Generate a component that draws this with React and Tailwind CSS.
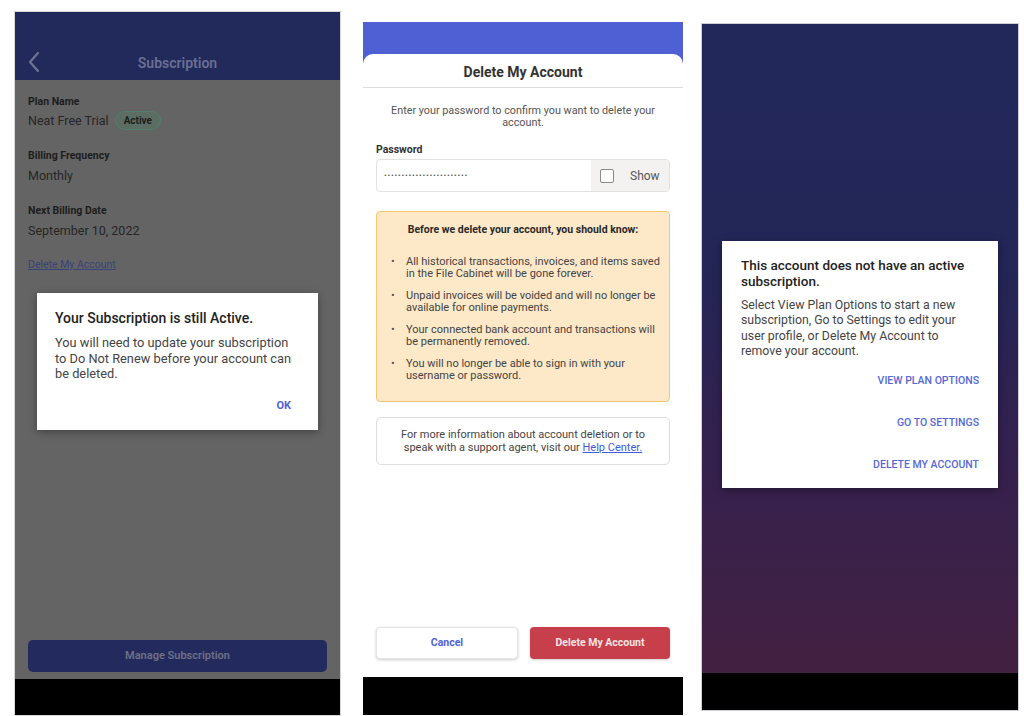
import React from "react";

function Panel1() {
  return (
    <div className="relative mt-[12px] ml-[15px] flex h-[703px] w-[325px] flex-col bg-[#646464] outline outline-1 outline-[#d8d8d8]">
      <div className="relative flex h-[68px] items-end justify-center bg-[#222a5c] pb-[6px]">
        <svg className="absolute left-[12px] bottom-[7px]" width="14" height="22" viewBox="0 0 14 22" fill="none">
          <path d="M11 2 L3 11 L11 20" stroke="#6f7390" strokeWidth="2.2" strokeLinecap="round" strokeLinejoin="round" />
        </svg>
        <span className="text-[14px] font-semibold text-[#6a6f92]">Subscription</span>
      </div>
      <div className="flex flex-1 flex-col px-[13px] pt-[15px] text-[#1d1d1d]">
        <div className="text-[10.5px] font-bold leading-[14px]">Plan Name</div>
        <div className="mt-[2px] flex items-center gap-[6px]">
          <span className="text-[12.5px] leading-[18px] text-[#262626]">Neat Free Trial</span>
          <span className="rounded-full border border-[#4f7f6a] bg-[#5c6d64] px-[8px] text-[10px] font-bold leading-[17px] text-[#1d1d1d]">Active</span>
        </div>
        <div className="mt-[19px] text-[10.5px] font-bold leading-[14px]">Billing Frequency</div>
        <div className="mt-[4px] text-[12.5px] leading-[18px] text-[#262626]">Monthly</div>
        <div className="mt-[19px] text-[10.5px] font-bold leading-[14px]">Next Billing Date</div>
        <div className="mt-[4px] text-[12.5px] leading-[18px] text-[#262626]">September 10, 2022</div>
        <div className="mt-[18px] text-[10.5px] leading-[14px] text-[#3a427a] underline">Delete My Account</div>
      </div>
      <div className="mx-[13px] mb-[7px] flex h-[32px] items-center justify-center rounded-[5px] bg-[#232a5e] text-[11px] font-semibold text-[#6f7085]">
        Manage Subscription
      </div>
      <div className="h-[36px] bg-black" />
      <div className="absolute left-[22px] top-[281px] w-[281px] bg-white pl-[18px] pr-[22px] pt-[16px] pb-[16px] shadow-[0_2px_8px_rgba(0,0,0,0.35)]">
        <div className="text-[14px] font-medium leading-[18px] text-[#222]">Your Subscription is still Active.</div>
        <div className="mt-[8px] text-[12.8px] leading-[15.5px] text-[#444]">
          You will need to update your subscription to Do Not Renew before your account can be deleted.
        </div>
        <div className="mt-[16px] flex justify-end pr-[5px] text-[11px] font-bold text-[#4f63d6]">OK</div>
      </div>
    </div>
  );
}

function Panel2() {
  const bullets = [
    "All historical transactions, invoices, and items saved in the File Cabinet will be gone forever.",
    "Unpaid invoices will be voided and will no longer be available for online payments.",
    "Your connected bank account and transactions will be permanently removed.",
    "You will no longer be able to sign in with your username or password.",
  ];
  return (
    <div className="mt-[22px] ml-[23px] flex h-[693px] w-[320px] flex-col bg-[#4f5fd4]">
      <div className="mt-[32px] flex flex-1 flex-col rounded-t-[10px] bg-white">
        <div className="flex h-[34px] items-center justify-center border-b border-[#dcdcdc] pt-[3px] text-[14px] font-bold text-[#333]">
          Delete My Account
        </div>
        <div className="mx-auto mt-[17px] w-[290px] text-center text-[10.8px] leading-[12px] text-[#555]">
          Enter your password to confirm you want to delete your account.
        </div>
        <div className="px-[13px]">
          <div className="mt-[15px] text-[10.5px] font-bold leading-[12px] text-[#333]">Password</div>
          <div className="mt-[3px] flex h-[33px] overflow-hidden rounded-[4px] border border-[#e2e2e2]">
            <div className="flex flex-1 items-center pl-[7px] text-[8px] tracking-[0.8px] text-[#555]">
              ••••••••••••••••••••••••
            </div>
            <div className="flex w-[78px] items-center bg-[#f4f2f0] pl-[9px]">
              <div className="h-[14px] w-[14px] rounded-[2px] border-[1.5px] border-[#8a8a8a] bg-white" />
              <span className="ml-[16px] text-[12px] text-[#555]">Show</span>
            </div>
          </div>
          <div className="mt-[19px] rounded-[4px] border border-[#f2c774] bg-[#fde9c8] pl-[14px] pr-[6px] pt-[12px] pb-[19px]">
            <div className="pr-[8px] text-center text-[10.5px] font-bold leading-[12px] text-[#2a2a2a]">
              Before we delete your account, you should know:
            </div>
            <ul className="mt-[20px] flex flex-col gap-[10px]">
              {bullets.map((b) => (
                <li key={b} className="flex text-[11px] leading-[12px] text-[#444]">
                  <span className="w-[15px] shrink-0 text-[#555]">•</span>
                  <span>{b}</span>
                </li>
              ))}
            </ul>
          </div>
          <div className="mt-[15px] rounded-[5px] border border-[#dedede] px-[18px] py-[10px] text-center text-[11px] leading-[13px] text-[#444]">
            For more information about account deletion or to speak with a support agent, visit our{" "}
            <span className="text-[#3f5bd8] underline">Help Center.</span>
          </div>
        </div>
        <div className="flex-1" />
        <div className="mb-[18px] flex gap-[12px] px-[13px]">
          <div className="flex h-[32px] flex-1 items-center justify-center rounded-[4px] border border-[#e5e5e5] bg-white text-[10.5px] font-bold text-[#4f63d6] shadow-[0_1px_3px_rgba(0,0,0,0.2)]">
            Cancel
          </div>
          <div className="flex h-[32px] flex-1 items-center justify-center rounded-[4px] bg-[#c83f4c] text-[10.5px] font-bold text-[#f6e4e4] shadow-[0_1px_3px_rgba(0,0,0,0.2)]">
            Delete My Account
          </div>
        </div>
        <div className="h-[38px] bg-black" />
      </div>
    </div>
  );
}

function Panel3() {
  return (
    <div className="mt-[24px] ml-[19px] flex h-[686px] w-[316px] flex-col bg-[linear-gradient(to_bottom,#22285a_0%,#232657_35%,#33214f_60%,#45203f_100%)] outline outline-1 outline-[#cfcfd8]">
      <div className="mx-[20px] mt-[217px] bg-white pl-[19px] pr-[22px] pt-[16px] pb-[16px] shadow-[0_2px_8px_rgba(0,0,0,0.35)]">
        <div className="text-[13.5px] font-medium leading-[16px] text-[#222]">
          This account does not have an active subscription.
        </div>
        <div className="mt-[9px] text-[12.3px] leading-[15.3px] text-[#444]">
          Select View Plan Options to start a new subscription, Go to Settings to edit your user profile, or Delete My Account to remove your account.
        </div>
        <div className="mt-[15px] -mr-[3px] flex flex-col items-end gap-[28px] text-[10.5px] font-medium leading-[14px] text-[#5568d8]">
          <span>VIEW PLAN OPTIONS</span>
          <span>GO TO SETTINGS</span>
          <span>DELETE MY ACCOUNT</span>
        </div>
      </div>
      <div className="flex-1" />
      <div className="h-[37px] bg-black" />
    </div>
  );
}

export default function App() {
  return (
    <div className="flex h-[716px] w-[1024px] items-start overflow-hidden bg-white font-['Roboto',sans-serif]">
      <Panel1 />
      <Panel2 />
      <Panel3 />
    </div>
  );
}
